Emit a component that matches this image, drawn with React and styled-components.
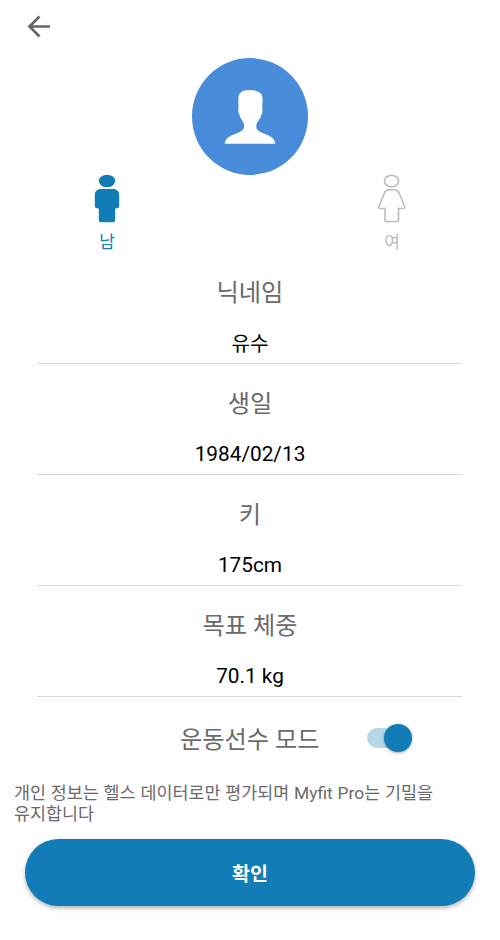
import React, { useState } from 'react';
import styled, { createGlobalStyle, ThemeProvider } from 'styled-components';

const theme = {
  primary: '#117cb6',
  track: '#b7d8e9',
  avatar: '#488cda',
  text: '#6b6b6b',
  muted: '#bdbdbd',
  line: '#dadada',
};

const GlobalStyle = createGlobalStyle`
  * {
    box-sizing: border-box;
  }

  body {
    margin: 0;
    background: #fefefe;
    font-family: Roboto, 'Noto Sans CJK KR', sans-serif;
  }
`;

const Page = styled.main`
  display: flex;
  flex-direction: column;
  width: 500px;
  height: 940px;
`;

const Header = styled.header`
  height: 58px;
  padding: 15px 0 0 27px;
`;

const BackButton = styled.button`
  display: block;
  padding: 0;
  border: none;
  background: none;
  cursor: pointer;

  svg {
    display: block;
  }
`;

const Avatar = styled.div`
  width: 116px;
  height: 117px;
  margin: 0 auto;
  border-radius: 50%;
  background: ${(props) => props.theme.avatar};
`;

const GenderRow = styled.div`
  display: flex;
  justify-content: space-between;
  height: 79px;
  padding: 0 88px 0 87px;
  margin-top: -1px;
`;

const GenderOption = styled.button`
  display: flex;
  flex-direction: column;
  align-items: center;
  width: 40px;
  padding: 0;
  border: none;
  background: none;
  color: ${(props) => (props.$active ? props.theme.primary : props.theme.muted)};
  font-family: inherit;
  font-size: 17px;
  line-height: 22px;
  cursor: pointer;

  svg {
    display: block;
    margin-bottom: 7px;
  }
`;

const FieldWrapper = styled.label`
  display: flex;
  flex-direction: column;
  align-items: center;
  height: 111px;
  margin: 0 38px 0 37px;
  padding: 22px 0 0 1px;
  border-bottom: 1px solid ${(props) => props.theme.line};
`;

const FieldLabel = styled.span`
  height: 36px;
  margin-bottom: 17px;
  color: ${(props) => props.theme.text};
  font-size: 24.2px;
  line-height: 36px;
`;

const FieldValue = styled.span`
  color: #000;
  font-size: ${(props) => (props.$korean ? '20.2px' : '20.8px')};
  line-height: ${(props) => (props.$korean ? '32px' : '30px')};
`;

const ModeRow = styled.div`
  display: flex;
  align-items: center;
  height: 84px;
  padding-left: 180px;
`;

const ModeLabel = styled.span`
  width: 187px;
  padding-top: 1px;
  color: ${(props) => props.theme.text};
  font-size: 24.2px;
  line-height: 36px;
`;

const Switch = styled.button`
  display: flex;
  align-items: center;
  justify-content: ${(props) => (props.$on ? 'flex-end' : 'flex-start')};
  width: 40px;
  height: 20px;
  margin-bottom: 2px;
  padding: 0;
  border: none;
  border-radius: 10px;
  background: ${(props) => (props.$on ? props.theme.track : props.theme.line)};
  cursor: pointer;
`;

const Thumb = styled.span`
  flex: none;
  width: 28px;
  height: 28px;
  margin-right: -5px;
  border-radius: 50%;
  background: ${(props) => props.theme.primary};
  box-shadow: 0 1px 3px rgba(0, 0, 0, 0.35);
`;

const Notice = styled.p`
  height: 58px;
  margin: 0;
  padding: 2px 50px 0 14px;
  color: ${(props) => props.theme.text};
  font-size: 17.4px;
  line-height: 21px;
  word-break: keep-all;
  word-spacing: 0.5px;
`;

const ConfirmButton = styled.button`
  height: 67px;
  margin: 0 25px;
  padding: 0;
  border: none;
  border-radius: 34px;
  background: ${(props) => props.theme.primary};
  box-shadow: 0 2px 4px rgba(0, 0, 0, 0.3);
  color: #fff;
  font-family: inherit;
  font-size: 19.5px;
  font-weight: 700;
  cursor: pointer;
`;

const BackIcon = () => (
  <svg width="24" height="24" viewBox="0 0 24 24" fill="none">
    <path
      d="M23 11.5H3M12.5 1.5L2.5 11.5l10 10"
      stroke="#666"
      strokeWidth="2.6"
    />
  </svg>
);

const PersonIcon = () => (
  <svg width="116" height="117" viewBox="0 0 116 117">
    <path
      fill="#fff"
      d="M57.700 32C53 32 49.500 33 48 35.300C46.300 37.500 46 41 46.600 49.500C45.800 51.500 46.200 55.500 47.600 57C48.300 60.500 50.500 62.500 51.600 65C52.300 67.500 52.300 69.500 51.300 71.300C49 74 45 75.200 41.300 76.700C37.500 78.200 33.500 80 32.700 85.700H83.300C82.500 80 78.500 78.200 74.700 76.700C71 75.200 67 74 64.900 71.300C64 69.500 64.100 67.500 64.800 65C66.200 62.500 68.500 60.500 69.200 57C70.500 55.500 70.900 51.500 70.100 49.500C70.700 44 71 40 69.900 37.500C69.200 35.500 68 34.500 66.500 34C64 32.500 61 32 57.700 32z"
    />
  </svg>
);

const MaleIcon = () => (
  <svg width="28" height="50" viewBox="0 0 28 50" fill="currentColor">
    <ellipse cx="14" cy="7" rx="8.200" ry="6.300" />
    <path d="M8 15h12c4 0 6.200 2.500 6.200 6v11c0 1.800-1.700 2.500-4 2.500V46c0 1.500-.7 2.200-2.200 2.200H8c-1.500 0-2.200-.7-2.200-2.200V34.500c-2.300 0-4-.7-4-2.500V21c0-3.500 2.200-6 6.200-6z" />
  </svg>
);

const FemaleIcon = () => (
  <svg
    width="30"
    height="50"
    viewBox="0 0 30 50"
    fill="none"
    stroke="currentColor"
    strokeWidth="1.6"
  >
    <ellipse cx="14.500" cy="7" rx="7" ry="5.800" />
    <path d="M12 15.800h5.500c2.500 0 3.700 1.200 4.500 3.200l5.500 13c.7 1.700.2 2.500-1.500 2.500h-4.500V46c0 1-.5 1.500-1.500 1.500H9.500C8.500 47.500 8 47 8 46V34.500H3.500C1.800 34.500 1.300 33.700 2 32l5.500-13c.8-2 2-3.200 4.500-3.200z" />
  </svg>
);

const fields = [
  { label: '닉네임', value: '유수', korean: true },
  { label: '생일', value: '1984/02/13' },
  { label: '키', value: '175cm' },
  { label: '목표 체중', value: '70.1 kg' },
];

const Field = ({ label, value, korean }) => (
  <FieldWrapper>
    <FieldLabel>{label}</FieldLabel>
    <FieldValue $korean={korean}>{value}</FieldValue>
  </FieldWrapper>
);

const App = () => {
  const [gender, setGender] = useState('male');
  const [athlete, setAthlete] = useState(true);

  return (
    <ThemeProvider theme={theme}>
      <GlobalStyle />
      <Page>
        <Header>
          <BackButton>
            <BackIcon />
          </BackButton>
        </Header>
        <Avatar>
          <PersonIcon />
        </Avatar>
        <GenderRow>
          <GenderOption
            $active={gender === 'male'}
            onClick={() => setGender('male')}
          >
            <MaleIcon />남
          </GenderOption>
          <GenderOption
            $active={gender === 'female'}
            onClick={() => setGender('female')}
          >
            <FemaleIcon />여
          </GenderOption>
        </GenderRow>
        {fields.map((field) => (
          <Field
            key={field.label}
            label={field.label}
            value={field.value}
            korean={field.korean}
          />
        ))}
        <ModeRow>
          <ModeLabel>운동선수 모드</ModeLabel>
          <Switch $on={athlete} onClick={() => setAthlete(!athlete)}>
            <Thumb />
          </Switch>
        </ModeRow>
        <Notice>
          개인 정보는 헬스 데이터로만 평가되며 Myfit Pro는 기밀을 유지합니다
        </Notice>
        <ConfirmButton>확인</ConfirmButton>
      </Page>
    </ThemeProvider>
  );
};

export default App;
